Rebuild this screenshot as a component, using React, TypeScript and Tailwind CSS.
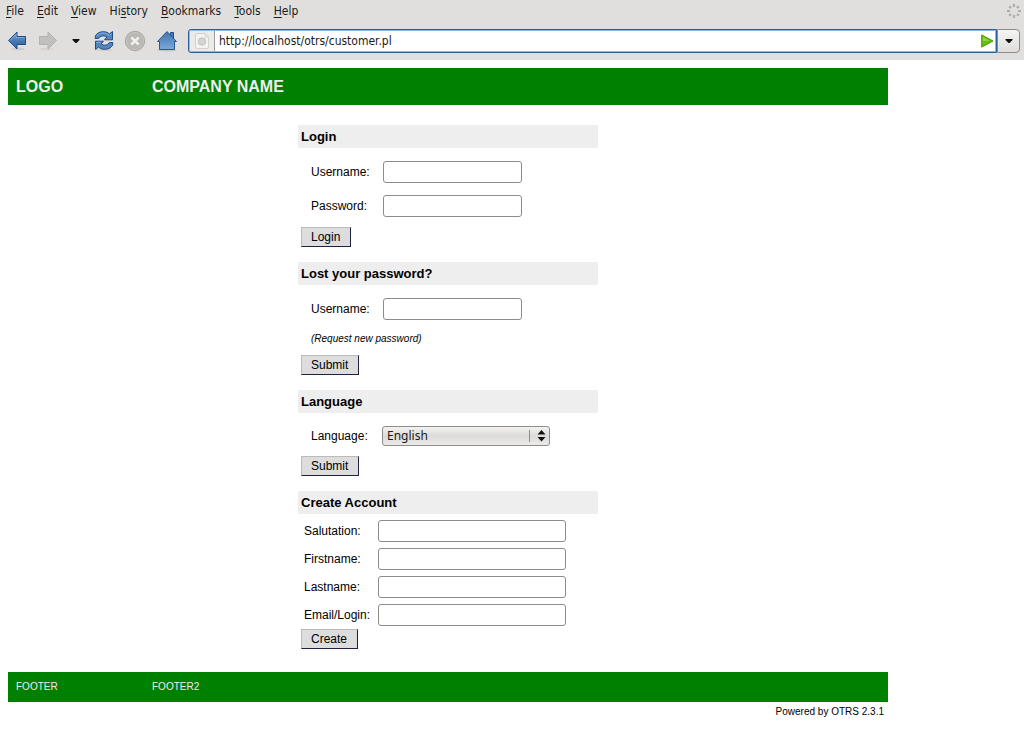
import { useId, type ReactNode } from 'react';

const menus = ['File', 'Edit', 'View', 'History', 'Bookmarks', 'Tools', 'Help'];
const menuKeys = [0, 0, 0, 2, 0, 0, 0];

function BackIcon() {
  return (
    <svg width="20" height="22" viewBox="0 0 20 22">
      <defs>
        <linearGradient id="back" x1="0" y1="0" x2="0" y2="1">
          <stop offset="0" stopColor="#7fa6d3" />
          <stop offset="0.6" stopColor="#3f73ae" />
          <stop offset="1" stopColor="#3a6ea8" />
        </linearGradient>
      </defs>
      <ellipse cx="11" cy="19" rx="7" ry="1.500" fill="#cfcecc" />
      <path d="M1.500 10.500 10 2v4.500h8.500v8H10V19z" fill="url(#back)" stroke="#204a87" strokeLinejoin="round" />
      <path d="M3 10.500 9 4.500v3h8.500" fill="none" stroke="#8fb5de" strokeWidth="0.700" />
    </svg>
  );
}

function ForwardIcon() {
  return (
    <svg width="20" height="22" viewBox="0 0 20 22">
      <ellipse cx="9" cy="19" rx="7" ry="1.500" fill="#d6d5d3" />
      <path d="M18.500 10.500 10 2v4.500H1.500v8H10V19z" fill="#c0c0bf" stroke="#b2b2b1" strokeLinejoin="round" />
    </svg>
  );
}

function ReloadIcon() {
  return (
    <svg width="20" height="22" viewBox="0 0 20 22">
      <ellipse cx="10" cy="19.800" rx="8" ry="1.500" fill="#cfcecc" />
      <g fill="#5585bd" stroke="#204a87" strokeLinejoin="round">
        <path d="M1.500 5.500C3.500 2.800 6 1.700 9.500 1.700c2.500 0 4.500.9 5.800 2.300L18.500 1.500v8.300h-8l2.400-2.700C10 5 6.500 5.800 4.800 8.300L1.200 8.500z" />
        <path d="M18.500 15.500c-2 2.700-4.500 3.800-8 3.800-2.500 0-4.500-.9-5.800-2.300L1.500 19.500v-8.300h8l-2.400 2.700c2.900 2.100 6.400 1.300 8.100-1.200l3.600-.2z" />
      </g>
      <path d="M2.800 6C5 3.500 8 2.500 11 3.200c2 .5 3 1.300 4 2.300l2.500-1.700M2.500 12.300h4.500" fill="none" stroke="#9fc1e6" strokeWidth="0.700" />
    </svg>
  );
}

function StopIcon() {
  return (
    <svg width="22" height="22" viewBox="0 0 22 22">
      <circle cx="11" cy="11" r="9.700" fill="#bbb7b5" stroke="#a9a5a3" />
      <circle cx="11" cy="11" r="8.500" fill="none" stroke="#c6c3c1" />
      <path d="m7.300 7.300 7.400 7.400m0-7.400-7.400 7.400" stroke="#f1f1f0" strokeWidth="2.400" />
    </svg>
  );
}

function HomeIcon() {
  return (
    <svg width="22" height="22" viewBox="0 0 22 22">
      <defs>
        <linearGradient id="home" x1="0" y1="0" x2="0" y2="1">
          <stop offset="0" stopColor="#3f73b0" />
          <stop offset="1" stopColor="#7ea8d8" />
        </linearGradient>
      </defs>
      <ellipse cx="11" cy="20" rx="10" ry="1.500" fill="#c8c7c5" />
      <path d="M14.500 2.500h3v6h-3z" fill="#4d7fba" stroke="#204a87" />
      <path d="M11 1.500 1.500 11.500h2v8h15v-8h2z" fill="url(#home)" stroke="#2a5592" strokeLinejoin="round" />
    </svg>
  );
}

function PageIcon() {
  return (
    <svg width="14" height="16" viewBox="0 0 14 16">
      <path d="M2 .5h8L13.500 4v10q0 1.500-1.500 1.500H2Q.5 15.500.5 14V2Q.5.5 2 .5z" fill="#f3f3f2" stroke="#d2d2d1" />
      <path d="M10 .5V4h3.500" fill="none" stroke="#d2d2d1" />
      <circle cx="7" cy="8.500" r="3.700" fill="#d4d4d3" stroke="#c3c3c2" />
    </svg>
  );
}

function GoIcon() {
  return (
    <svg width="13" height="14" viewBox="0 0 13 14">
      <path d="M.7.900 12 7 .7 13.100z" fill="#66bd15" stroke="#4b9a06" strokeLinejoin="round" />
      <path d="M2 3 9 7H2z" fill="#8bd83f" />
    </svg>
  );
}

function Caret() {
  return (
    <svg width="8" height="4" viewBox="0 0 8 4">
      <path d="M.5 0h7v1l-3 3h-1l-3-3z" fill="#111" />
    </svg>
  );
}

function Throbber() {
  return (
    <svg width="14" height="14" viewBox="0 0 14 14" stroke="#acacab" strokeWidth="2.200">
      <path d="M7 0v3M7 11v3M0 7h3M11 7h3M2.200 2.200l1.800 1.800M10 10l1.800 1.800M11.800 2.200 10 4M4 10l-1.800 1.800" />
    </svg>
  );
}

function Heading({ children }: { children: ReactNode }) {
  return <h2 className="h-[23px] bg-[#eee] px-[3px] text-[13px] leading-[23px] font-bold">{children}</h2>;
}

function Submit({ children }: { children: ReactNode }) {
  return (
    <button
      type="button"
      className="ml-[3px] block h-5 border border-t-[#bbb] border-r-[#202040] border-b-[#202040] border-l-[#bbb] bg-[#ddd] pr-[10px] pl-[9px] text-[12px] leading-4"
    >
      {children}
    </button>
  );
}

const inputStyle = 'h-[22px] rounded-[3px] border border-[#8f8b88] bg-white px-1 text-[12px] outline-none';

function Field({ label, type = 'text' }: { label: string; type?: string }) {
  const id = useId();
  return (
    <div className="flex items-center pl-[13px]">
      <label htmlFor={id} className="w-[72px]">{label}</label>
      <input id={id} type={type} className={`${inputStyle} w-[139px]`} />
    </div>
  );
}

function AccountField({ label }: { label: string }) {
  const id = useId();
  return (
    <div className="flex items-center pl-1.5">
      <label htmlFor={id} className="w-[74px]">{label}</label>
      <input id={id} type="text" className={`${inputStyle} w-[188px]`} />
    </div>
  );
}

function BrowserBar() {
  return (
    <header className="h-[60px] bg-[#e0dfdd] font-['DejaVu_Sans_Condensed','Noto_Sans',sans-serif] text-[12px] text-[#1a1a1a]">
      <div className="flex h-[22px] items-center justify-between pr-[3px] pl-1.5">
        <nav className="flex gap-[13px]">
          {menus.map((name, i) => (
            <button key={name} type="button" className="leading-4">
              {name.slice(0, menuKeys[i])}
              <span className="underline underline-offset-2">{name[menuKeys[i]]}</span>
              {name.slice(menuKeys[i] + 1)}
            </button>
          ))}
        </nav>
        <Throbber />
      </div>
      <div className="flex h-[38px] items-center pr-1 pl-[7px]">
        <button type="button" aria-label="Back"><BackIcon /></button>
        <button type="button" aria-label="Forward" className="ml-[11px]"><ForwardIcon /></button>
        <button type="button" aria-label="Recent pages" className="ml-[14px]"><Caret /></button>
        <button type="button" aria-label="Reload" className="ml-[14px]"><ReloadIcon /></button>
        <button type="button" aria-label="Stop" className="ml-[10px]"><StopIcon /></button>
        <button type="button" aria-label="Home" className="ml-[10px]"><HomeIcon /></button>
        <div className="ml-[10px] flex h-6 flex-1 rounded-l-[3px] border border-[#2c5d94] bg-white shadow-[inset_0_0_0_1px_#8db9e4]">
          <span className="my-px ml-px flex w-[25px] items-center justify-center border-r border-[#9a9a98] bg-[#ebebea]">
            <PageIcon />
          </span>
          <input
            type="text"
            aria-label="Address"
            defaultValue="http://localhost/otrs/customer.pl"
            className="min-w-0 flex-1 bg-transparent pl-1 outline-none"
          />
          <button type="button" aria-label="Go" className="mr-[2px]"><GoIcon /></button>
        </div>
        <button
          type="button"
          aria-label="Show history"
          className="flex h-6 w-[23px] items-center justify-center rounded-r-[4px] border border-[#8f8b88] bg-linear-to-b from-[#f5f5f4] to-[#dededc]"
        >
          <Caret />
        </button>
      </div>
    </header>
  );
}

export default function App() {
  return (
    <div className="min-h-screen bg-white font-['Liberation_Sans',Arial,sans-serif] text-[12px] leading-4 text-black">
      <BrowserBar />
      <div className="m-2 max-w-[880px]">
        <div className="flex h-[37px] items-center bg-[#008000] px-2 text-[16px] font-bold text-[#eee]">
          <span className="w-[136px]">LOGO</span>
          <span>COMPANY NAME</span>
        </div>
        <main className="mx-auto my-5 flex w-[300px] flex-col gap-[15px]">
          <form>
            <Heading>Login</Heading>
            <div className="flex flex-col gap-3 pt-[13px] pb-[10px]">
              <Field label="Username:" />
              <Field label="Password:" type="password" />
            </div>
            <Submit>Login</Submit>
          </form>
          <form>
            <Heading>Lost your password?</Heading>
            <div className="flex flex-col gap-[11px] pt-[13px] pb-2">
              <Field label="Username:" />
              <p className="pl-[13px] text-[10px] italic">(Request new password)</p>
            </div>
            <Submit>Submit</Submit>
          </form>
          <form>
            <Heading>Language</Heading>
            <div className="flex items-center pt-[13px] pb-[10px] pl-[13px]">
              <label htmlFor="language" className="w-[71px]">Language:</label>
              <div className="relative">
                <select
                  id="language"
                  className="block h-5 w-[168px] appearance-none rounded-[3px] border border-[#8f8b88] bg-linear-to-b from-[#f3f3f2] via-[#dcdbd9] to-[#ecebea] pl-1 font-['Noto_Sans',sans-serif] text-[12px] leading-4 text-[#1a1a1a] outline-none"
                >
                  <option>English</option>
                </select>
                <svg width="18" height="12" viewBox="0 0 18 12" className="pointer-events-none absolute top-1 right-[3px]">
                  <path d="M.5 0v12" stroke="#8f8b88" />
                  <path d="M12.500 0 16.500 4.500h-8zM12.500 11.500l4-4.500h-8z" fill="#111" />
                </svg>
              </div>
            </div>
            <Submit>Submit</Submit>
          </form>
          <form>
            <Heading>Create Account</Heading>
            <div className="flex flex-col gap-1.5 pt-1.5 pb-[3px]">
              <AccountField label="Salutation:" />
              <AccountField label="Firstname:" />
              <AccountField label="Lastname:" />
              <AccountField label="Email/Login:" />
            </div>
            <Submit>Create</Submit>
          </form>
        </main>
        <footer className="mt-[23px]">
          <div className="flex h-[30px] items-center bg-[#008000] px-2 text-[10px] text-[#eee]">
            <span className="w-[136px]">FOOTER</span>
            <span>FOOTER2</span>
          </div>
          <p className="pt-0.5 pr-1 text-right text-[10px]">Powered by OTRS 2.3.1</p>
        </footer>
      </div>
    </div>
  );
}
